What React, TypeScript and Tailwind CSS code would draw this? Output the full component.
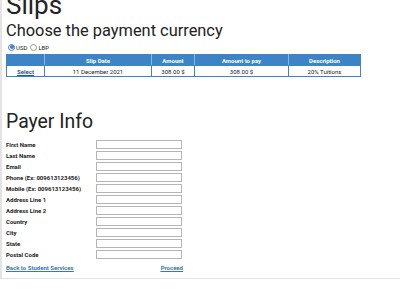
const fields = [
  "First Name",
  "Last Name",
  "Email",
  "Phone (Ex: 009613123456)",
  "Mobile (Ex: 009613123456)",
  "Address Line 1",
  "Address Line 2",
  "Country",
  "City",
  "State",
  "Postal Code",
];

function App() {
  return (
    <div className="w-[400px] h-[300px] overflow-hidden bg-white text-[#222] font-['Roboto',sans-serif]">
      <div className="border-l-2 border-b border-[#e3e3e3] pl-[4px] pb-[6px]">
        <h1 className="text-[26px] leading-[26px] -mt-[8px]">Slips</h1>
        <h2 className="text-[16.4px] leading-[18px] mt-[4px]">Choose the payment currency</h2>

        <div className="flex items-center mt-[3px] ml-[2px] text-[6px] h-[8px]">
          <span className="w-[7px] h-[7px] rounded-full border border-[#3b7fc4] flex items-center justify-center">
            <span className="w-[4px] h-[4px] rounded-full bg-[#3b7fc4]" />
          </span>
          <span className="ml-[1px]">USD</span>
          <span className="ml-[3px] w-[7px] h-[7px] rounded-full border border-[#999]" />
          <span className="ml-[1px]">LBP</span>
        </div>

        <table className="mt-[3px] border-collapse text-[6px] w-[355px]">
          <thead>
            <tr className="bg-[#3d84c6] text-white font-bold h-[11px]">
              <th className="border border-[#3d84c6] border-r-white/40 w-[38px]"></th>
              <th className="border border-[#3d84c6] border-r-white/40 w-[107px]">Slip Date</th>
              <th className="border border-[#3d84c6] border-r-white/40 w-[43px]">Amount</th>
              <th className="border border-[#3d84c6] border-r-white/40 w-[94px]">Amount to pay</th>
              <th className="border border-[#3d84c6]">Description</th>
            </tr>
          </thead>
          <tbody>
            <tr className="h-[11px] text-center">
              <td className="border border-[#3d84c6]">
                <a className="font-bold text-[#2a5d8f] underline">Select</a>
              </td>
              <td className="border border-[#3d84c6]">11 December 2021</td>
              <td className="border border-[#3d84c6]">308.00 $</td>
              <td className="border border-[#3d84c6]">308.00 $</td>
              <td className="border border-[#3d84c6]">20% Tuitions</td>
            </tr>
          </tbody>
        </table>

        <h2 className="text-[19.4px] leading-[22px] mt-[34px]">Payer Info</h2>

        <div className="mt-[6px] w-[177px]">
          {fields.map((f) => (
            <div key={f} className="flex items-center h-[11px]">
              <span className="w-[90px] text-[6px] font-bold">{f}</span>
              <input className="w-[86px] h-[9px] border border-[#b5b5b5] bg-white" />
            </div>
          ))}
          <div className="flex justify-between items-center mt-[3px] text-[6px] font-bold text-[#3b78b0] underline">
            <a>Back to Student Services</a>
            <a>Proceed</a>
          </div>
        </div>
      </div>
    </div>
  );
}

export default App;
